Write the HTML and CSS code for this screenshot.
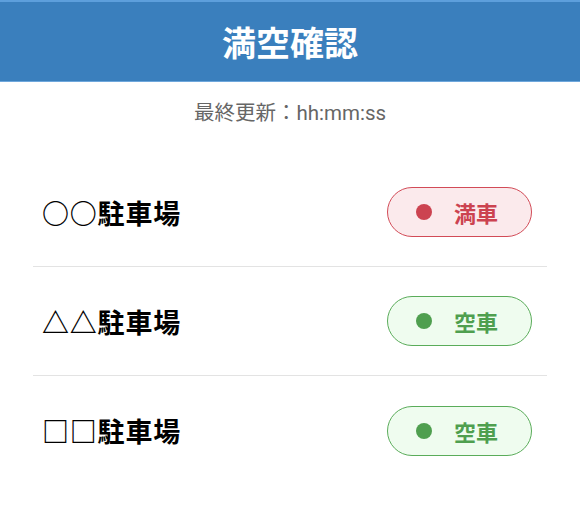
FILE: index.html
```html
<!DOCTYPE html>
<html lang="ja">
<head>
<meta charset="utf-8">
<link rel="stylesheet" href="styles.css">
</head>
<body>
<header class="header"><h1 class="title">満空確認</h1></header>
<p class="updated">最終更新：hh:mm:ss</p>
<ul class="list">
  <li class="row">
    <span class="name">○○駐車場</span>
    <span class="badge badge-full"><span class="dot"></span><span class="label">満車</span></span>
  </li>
  <li class="row">
    <span class="name">△△駐車場</span>
    <span class="badge badge-free"><span class="dot"></span><span class="label">空車</span></span>
  </li>
  <li class="row">
    <span class="name">□□駐車場</span>
    <span class="badge badge-free"><span class="dot"></span><span class="label">空車</span></span>
  </li>
</ul>
</body>
</html>
```
FILE: styles.css
```css
* { box-sizing: border-box; }
body {
  margin: 0;
  background: #fff;
  font-family: Roboto, "Noto Sans CJK JP", sans-serif;
  color: #000;
}
.header {
  border-top: 2px solid #5d9fdc;
  background: #3a7fbd;
  height: 82px;
  border-bottom: 1px solid #6ea7dc;
  display: flex;
  align-items: center;
  justify-content: center;
}
.title {
  margin: 0;
  color: #fff;
  font-family: "Noto Sans CJK JP", sans-serif;
  font-size: 34px;
  font-weight: 700;
  line-height: 1;
}
.updated {
  margin: 18px 0 0;
  text-align: center;
  font-size: 20.5px;
  line-height: 26px;
  color: #666;
}
.list {
  list-style: none;
  margin: 32px 33px 0;
  padding: 0;
}
.row {
  height: 109px;
  display: flex;
  align-items: center;
  justify-content: space-between;
  padding: 0 15px 0 9px;
  border-bottom: 1px solid #e3e3e3;
}
.row:last-child { border-bottom: none; }
.name {
  font-family: "Noto Sans CJK JP", sans-serif;
  font-size: 27px;
  font-weight: 700;
  line-height: 1;
  letter-spacing: 0.8px;
}
.badge {
  width: 145px;
  height: 50px;
  border-radius: 25px;
  border: 1.5px solid;
  display: flex;
  align-items: center;
  padding-left: 28px;
  gap: 22px;
}
.dot {
  width: 16px;
  height: 16px;
  border-radius: 50%;
  background: currentColor;
}
.label {
  font-family: "Noto Sans CJK JP", sans-serif;
  font-size: 22px;
  font-weight: 700;
  line-height: 1;
}
.badge-full {
  color: #cc4350;
  border-color: #d24b57;
  background: #fbeaec;
}
.badge-free {
  color: #4f9f4f;
  border-color: #5aac5a;
  background: #effcef;
}
```
